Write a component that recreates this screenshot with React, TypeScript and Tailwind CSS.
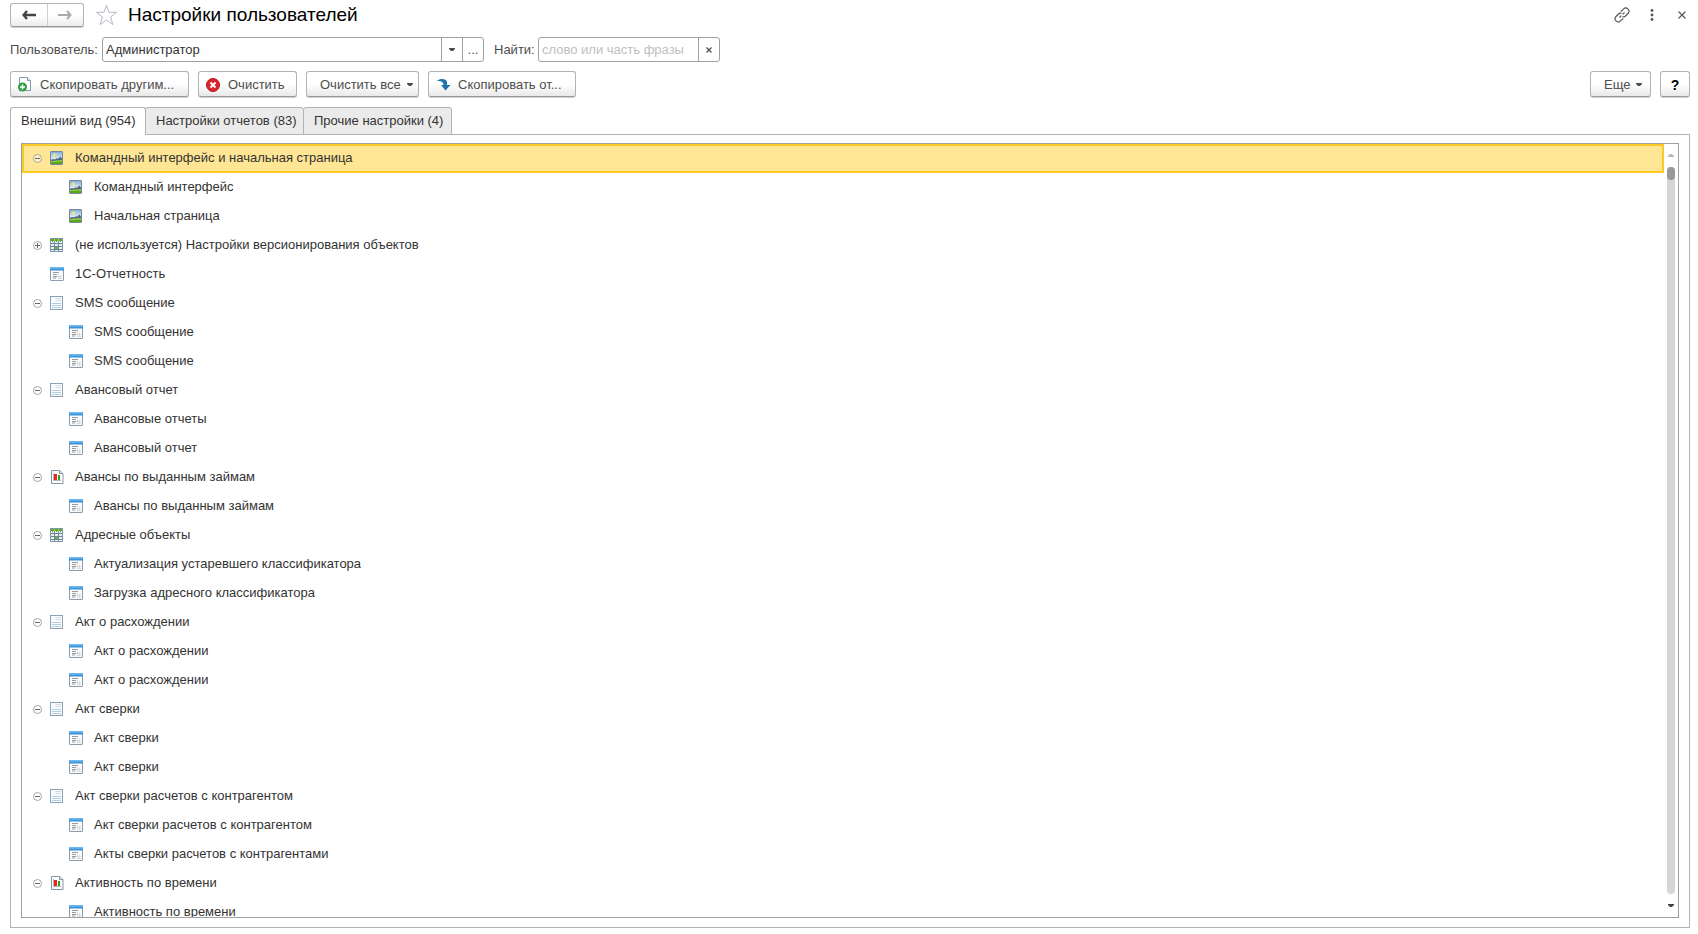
import { useState, type ReactNode } from 'react'
import { clsx } from 'clsx'

type IconName = 'picture' | 'register' | 'form' | 'document' | 'report'

interface TreeNode {
  id: string
  title: string
  icon: IconName
  collapsed?: boolean
  children?: TreeNode[]
}

const form = (id: string, title: string): TreeNode => ({ id, title, icon: 'form' })

const nodes: TreeNode[] = [
  {
    id: 'ui',
    title: 'Командный интерфейс и начальная страница',
    icon: 'picture',
    children: [
      { id: 'ui-1', title: 'Командный интерфейс', icon: 'picture' },
      { id: 'ui-2', title: 'Начальная страница', icon: 'picture' },
    ],
  },
  {
    id: 'versions',
    title: '(не используется) Настройки версионирования объектов',
    icon: 'register',
    collapsed: true,
    children: [form('versions-1', 'Настройки версионирования объектов')],
  },
  form('reporting', '1С-Отчетность'),
  {
    id: 'sms',
    title: 'SMS сообщение',
    icon: 'document',
    children: [form('sms-1', 'SMS сообщение'), form('sms-2', 'SMS сообщение')],
  },
  {
    id: 'advance',
    title: 'Авансовый отчет',
    icon: 'document',
    children: [form('advance-1', 'Авансовые отчеты'), form('advance-2', 'Авансовый отчет')],
  },
  {
    id: 'loans',
    title: 'Авансы по выданным займам',
    icon: 'report',
    children: [form('loans-1', 'Авансы по выданным займам')],
  },
  {
    id: 'address',
    title: 'Адресные объекты',
    icon: 'register',
    children: [
      form('address-1', 'Актуализация устаревшего классификатора'),
      form('address-2', 'Загрузка адресного классификатора'),
    ],
  },
  {
    id: 'diff',
    title: 'Акт о расхождении',
    icon: 'document',
    children: [form('diff-1', 'Акт о расхождении'), form('diff-2', 'Акт о расхождении')],
  },
  {
    id: 'check',
    title: 'Акт сверки',
    icon: 'document',
    children: [form('check-1', 'Акт сверки'), form('check-2', 'Акт сверки')],
  },
  {
    id: 'contractor',
    title: 'Акт сверки расчетов с контрагентом',
    icon: 'document',
    children: [
      form('contractor-1', 'Акт сверки расчетов с контрагентом'),
      form('contractor-2', 'Акты сверки расчетов с контрагентами'),
    ],
  },
  {
    id: 'activity',
    title: 'Активность по времени',
    icon: 'report',
    children: [form('activity-1', 'Активность по времени')],
  },
]

const tabs = [
  { title: 'Внешний вид (954)', width: 'w-[136px]' },
  { title: 'Настройки отчетов (83)', width: 'w-[159px]' },
  { title: 'Прочие настройки (4)', width: 'w-[149px]' },
]

function NodeIcon({ name }: { name: IconName }) {
  const common = { width: 14, height: 14, viewBox: '0 0 14 14', className: 'shrink-0', 'aria-hidden': true }

  switch (name) {
    case 'picture':
      return (
        <svg {...common}>
          <defs>
            <linearGradient id="sky" x1="0" y1="0" x2="0" y2="1">
              <stop offset="0" stopColor="#7fa9dc" />
              <stop offset="0.6" stopColor="#e6f2fb" />
            </linearGradient>
          </defs>
          <rect x="0.5" y="0.5" width="12" height="13" rx="0.5" fill="url(#sky)" stroke="#7488a0" />
          <path d="M1 10V8.700L3 8l1.500.6L7 7.300l1.200.4L10.300 5.500 12 7.500V10z" fill="#52667a" />
          <rect x="1" y="10" width="11" height="3" fill="#58a81f" />
          <path d="M1 9.800c3 .4 6-.8 11-.8v1.500c-4 0-7 .8-11 .5z" fill="#9ccf4a" />
          <path d="M4.500 2v4M2.500 4h4" stroke="#fff04a" fill="none" />
        </svg>
      )
    case 'register':
      return (
        <svg {...common}>
          <rect x="0.5" y="0.5" width="12" height="13" fill="#e9f1f7" stroke="#8298aa" />
          <path d="M4.500 2v11M8.500 2v11M1 5.500h11M1 8.500h11M1 11.500h11" stroke="#6c8799" fill="none" />
          <rect x="1" y="1" width="11" height="2" fill="#a5d36f" />
          <path d="M1 1h3v2H3v1H2V3H1zM5 1h3v2H7v1H6V3H5zM9 1h3v2h-1v1h-1V3H9z" fill="#5fa81f" />
          <rect x="5" y="9" width="3" height="2" fill="#67bd28" />
        </svg>
      )
    case 'form':
      return (
        <svg {...common}>
          <rect x="0.5" y="0.5" width="13" height="13" rx="0.5" fill="#f8fafb" stroke="#8c9cab" />
          <path d="M0 1Q0 0 1 0h12q1 0 1 1v2.500H0z" fill="#3a92d8" />
          <path d="M0 1Q0 0 1 0h12q1 0 1 1v.8H0z" fill="#68b7f0" />
          <path d="M3 5.500h6M3 7.500h4M3 9.500h4M3 11h3" stroke="#9b9b9b" strokeWidth="1.200" fill="none" />
          <path d="M7 9.500h5M8 11.500h4M8.500 7v5M10.500 8v4" stroke="#dadada" fill="none" />
        </svg>
      )
    case 'document':
      return (
        <svg {...common}>
          <rect x="0.5" y="0.5" width="12" height="13" fill="#f8fbfd" stroke="#8da1b3" />
          <path d="M5.500 2.500H11M5.500 4.500H11" stroke="#d3dce3" fill="none" />
          <path d="M2 7.500h9M2 9.500h9M2 11.500h9" stroke="#b3cee1" fill="none" />
        </svg>
      )
    case 'report':
      return (
        <svg {...common}>
          <path d="M1.500.5h8l3.500 3v10H1.500z" fill="#fff" stroke="#8595a2" />
          <path d="M9.500.5v3H13" fill="#dce5ec" stroke="#8595a2" />
          <path d="M3.500 3v7.500H11" stroke="#b5b5b5" fill="none" />
          <rect x="4" y="4" width="3" height="6" fill="#e8281e" />
          <rect x="8" y="5" width="2" height="5" fill="#2ca02c" />
        </svg>
      )
  }
}

function Caret({ up, className }: { up?: boolean; className?: string }) {
  return (
    <svg width="6" height="4" viewBox="0 0 6 4" className={clsx('shrink-0', className)} aria-hidden="true">
      <path d={up ? 'M0 4V3l2-2h2l2 2v1z' : 'M0 0h6v1L4 3H2L0 1z'} fill="currentColor" />
    </svg>
  )
}

function ToolButton({ children, className, label }: { children: ReactNode; className?: string; label?: string }) {
  return (
    <button
      type="button"
      aria-label={label}
      className={clsx(
        'flex h-[26px] items-center rounded-[3px] border border-[#b3b3b3] border-b-[#9a9a9a] bg-linear-to-b from-white from-50% to-[#e9e9e9] pt-px shadow-[0_1px_0_#cfcfcf]',
        className,
      )}
    >
      {children}
    </button>
  )
}

function TreeRow({
  node,
  level,
  open,
  selected,
  onToggle,
  onSelect,
}: {
  node: TreeNode
  level: number
  open: boolean
  selected: boolean
  onToggle: () => void
  onSelect: () => void
}) {
  return (
    <div
      onClick={onSelect}
      className={clsx(
        'flex h-[29px] items-center border-2 pb-px text-[#333]',
        level === 0 ? 'pl-[9px]' : 'pl-7',
        selected ? 'border-[#fbcb23] bg-[#ffe694]' : 'border-transparent',
      )}
    >
      {node.children ? (
        <button type="button" onClick={onToggle} aria-label={open ? 'Свернуть' : 'Развернуть'} className="mr-2 shrink-0">
          <svg width="9" height="9" viewBox="0 0 9 9" aria-hidden="true">
            <circle cx="4.500" cy="4.500" r="4" fill="#fff" fillOpacity="0.5" stroke="#a5a5a5" />
            <path d={open ? 'M2 4.500h5' : 'M2 4.500h5M4.500 2v5'} stroke="#666" />
          </svg>
        </button>
      ) : (
        <span className="mr-2 w-[9px] shrink-0" />
      )}
      <NodeIcon name={node.icon} />
      <span className="ml-[11px] truncate">{node.title}</span>
    </div>
  )
}

export default function App() {
  const [activeTab, setActiveTab] = useState(0)
  const [selected, setSelected] = useState('ui')
  const [user, setUser] = useState('Администратор')
  const [query, setQuery] = useState('')
  const [closed, setClosed] = useState<string[]>(nodes.filter((n) => n.collapsed).map((n) => n.id))

  const toggle = (id: string) =>
    setClosed((prev) => (prev.includes(id) ? prev.filter((x) => x !== id) : [...prev, id]))

  return (
    <div className="flex h-screen flex-col bg-white px-2 pt-[3px] pb-[6px] pl-[10px] font-['Liberation_Sans',Arial,sans-serif] text-[13px] leading-4 text-[#4d4d4d]">
      {/* Title */}
      <header className="flex h-6 items-center">
        <div className="flex h-6 w-[74px] shrink-0 rounded-[3px] border border-[#b3b3b3] border-b-[#9a9a9a] bg-linear-to-b from-white from-50% to-[#ececec] shadow-[0_1px_0_#cfcfcf]">
          <button type="button" aria-label="Назад" className="flex flex-1 items-center justify-center border-r border-[#cfcfcf]">
            <svg width="14" height="10" viewBox="0 0 14 10" aria-hidden="true">
              <path d="M5 1L1.500 5 5 9M1.500 5H14" fill="none" stroke="#444" strokeWidth="2.400" />
            </svg>
          </button>
          <button type="button" aria-label="Вперед" className="flex flex-1 items-center justify-center">
            <svg width="14" height="10" viewBox="0 0 14 10" aria-hidden="true">
              <path d="M9 1l3.500 4L9 9M12.500 5H0" fill="none" stroke="#aaa" strokeWidth="2" />
            </svg>
          </button>
        </div>
        <button type="button" aria-label="В избранное" className="ml-[11px] shrink-0">
          <svg width="23" height="22" viewBox="0 0 23 22" aria-hidden="true">
            <path
              d="M11.500 1.200l2.500 7.100h7.600l-6 4.700 2.200 7.600-6.300-4.500-6.300 4.500 2.200-7.600-6-4.700h7.600z"
              fill="#fff"
              stroke="#b4bac2"
            />
          </svg>
        </button>
        <h1 className="ml-[10px] text-[19px] leading-6 text-black">Настройки пользователей</h1>
        <div className="ml-auto flex items-center pr-1 text-[#555]">
          <button type="button" aria-label="Ссылка">
            <svg width="16" height="16" viewBox="0 0 16 16" fill="none" stroke="currentColor" strokeWidth="1.200" aria-hidden="true">
              <path d="M6.800 4.700l2.900-2.900a2.800 2.800 0 0 1 4 0l.5.500a2.800 2.800 0 0 1 0 4L11.500 9a2.800 2.800 0 0 1-3 .500" />
              <path d="M9.200 11.300l-2.900 2.900a2.800 2.800 0 0 1-4 0l-.5-.5a2.800 2.800 0 0 1 0-4L4.500 7a2.800 2.800 0 0 1 3-.5" />
              <path d="M5.500 10.500l1.800-1.800M8.700 7.300l1.800-1.800" />
            </svg>
          </button>
          <button type="button" aria-label="Меню" className="ml-5">
            <svg width="4" height="12" viewBox="0 0 4 12" fill="currentColor" aria-hidden="true">
              <circle cx="2" cy="1.500" r="1.400" />
              <circle cx="2" cy="6" r="1.400" />
              <circle cx="2" cy="10.500" r="1.400" />
            </svg>
          </button>
          <button type="button" aria-label="Закрыть" className="ml-6">
            <svg width="8" height="8" viewBox="0 0 8 8" stroke="currentColor" strokeWidth="1.200" aria-hidden="true">
              <path d="M.5.5l7 7M7.500.5l-7 7" />
            </svg>
          </button>
        </div>
      </header>

      {/* User and search */}
      <div className="mt-[10px] flex items-center">
        <label htmlFor="user" className="w-[92px] shrink-0">
          Пользователь:
        </label>
        <div className="flex h-[25px] w-[382px] rounded-[3px] border border-[#a0a0a0]">
          <input
            id="user"
            value={user}
            onChange={(e) => setUser(e.target.value)}
            className="min-w-0 flex-1 px-[3px] text-[#333] outline-none"
          />
          <button type="button" aria-label="Выбрать из списка" className="flex w-[21px] items-center justify-center border-l border-[#a0a0a0]">
            <Caret />
          </button>
          <button type="button" aria-label="Выбрать" className="w-[21px] border-l border-[#a0a0a0]">
            ...
          </button>
        </div>
        <label htmlFor="search" className="ml-[10px] w-11 shrink-0">
          Найти:
        </label>
        <div className="flex h-[25px] w-[182px] rounded-[3px] border border-[#a0a0a0]">
          <input
            id="search"
            value={query}
            onChange={(e) => setQuery(e.target.value)}
            placeholder="слово или часть фразы"
            className="min-w-0 flex-1 pl-[3px] text-[#333] outline-none placeholder:text-[#c0c0c0]"
          />
          <button
            type="button"
            aria-label="Очистить поиск"
            onClick={() => setQuery('')}
            className="flex w-[21px] items-center justify-center border-l border-[#a0a0a0]"
          >
            <svg width="6" height="6" viewBox="0 0 6 6" stroke="currentColor" strokeWidth="1.200" aria-hidden="true">
              <path d="M.5.5l5 5M5.500.5l-5 5" />
            </svg>
          </button>
        </div>
      </div>

      {/* Commands */}
      <div className="mt-[9px] flex items-center gap-[9px]">
        <ToolButton className="w-[179px] pl-[7px]">
          <svg width="14" height="15" viewBox="0 0 14 15" aria-hidden="true">
            <path d="M1.500.5h8l3 3v10h-11z" fill="#fff" stroke="#8797a6" />
            <path d="M9.500.5v3h3" fill="#e3eaf0" stroke="#8797a6" />
            <circle cx="4.500" cy="10" r="4.500" fill="#2f9e3f" />
            <path d="M4.500 7.500v5M2 10h5" stroke="#fff" strokeWidth="1.500" />
          </svg>
          <span className="ml-2">Скопировать другим...</span>
        </ToolButton>
        <ToolButton className="w-[99px] pl-[7px]">
          <svg width="14" height="14" viewBox="0 0 14 14" aria-hidden="true">
            <circle cx="7" cy="7" r="6.500" fill="#d9252b" stroke="#b5161c" />
            <path d="M4.500 4.500l5 5M9.500 4.500l-5 5" stroke="#fff" strokeWidth="2" />
          </svg>
          <span className="ml-2">Очистить</span>
        </ToolButton>
        <ToolButton className="w-[113px] pl-[13px]">
          Очистить все
          <Caret className="ml-[6px]" />
        </ToolButton>
        <ToolButton className="w-[148px] pl-2">
          <svg width="14" height="12" viewBox="0 0 14 12" aria-hidden="true">
            <path d="M0 2C3-.6 8-.6 10 2.500V6h3.500L8.500 11.500 4 6h2.500C6.500 3 4 1.500 0 2z" fill="#2373ae" />
          </svg>
          <span className="ml-[7px]">Скопировать от...</span>
        </ToolButton>
        <ToolButton className="ml-auto w-[61px] pl-[13px]">
          Еще
          <Caret className="ml-[6px]" />
        </ToolButton>
        <ToolButton className="w-[30px] justify-center text-sm font-bold text-black" label="Справка">
          ?
        </ToolButton>
      </div>

      {/* Tabs */}
      <div role="tablist" className="relative z-10 mt-[10px] -mb-px flex">
        {tabs.map((tab, i) => (
          <button
            key={tab.title}
            type="button"
            role="tab"
            aria-selected={activeTab === i}
            onClick={() => setActiveTab(i)}
            className={clsx(
              'h-7 rounded-t-[3px] border border-[#b3b3b3] pl-[10px] text-left whitespace-nowrap text-[#333]',
              tab.width,
              i > 0 && '-ml-px',
              activeTab === i ? 'border-b-white bg-white' : 'bg-[#ebebeb]',
            )}
          >
            {tab.title}
          </button>
        ))}
      </div>

      <main className="flex min-h-0 flex-1 border border-[#b3b3b3] px-[10px] pt-2 pb-[9px]">
        <div className="flex min-w-0 flex-1 border border-[#a0a0a0]">
          <ul role="tree" aria-label={tabs[activeTab].title} className="min-w-0 flex-1 overflow-hidden">
            {nodes.map((node) => {
              const open = !closed.includes(node.id)
              return (
                <li key={node.id} role="treeitem" aria-expanded={node.children ? open : undefined}>
                  <TreeRow
                    node={node}
                    level={0}
                    open={open}
                    selected={selected === node.id}
                    onToggle={() => toggle(node.id)}
                    onSelect={() => setSelected(node.id)}
                  />
                  {node.children && open && (
                    <ul role="group">
                      {node.children.map((child) => (
                        <li key={child.id} role="treeitem">
                          <TreeRow
                            node={child}
                            level={1}
                            open={false}
                            selected={selected === child.id}
                            onToggle={() => undefined}
                            onSelect={() => setSelected(child.id)}
                          />
                        </li>
                      ))}
                    </ul>
                  )}
                </li>
              )
            })}
          </ul>
          {/* Scroll bar */}
          <div className="flex w-[14px] shrink-0 flex-col items-center py-[9px]">
            <Caret up className="text-[#b8b8b8]" />
            <div className="my-[10px] w-2 flex-1 rounded-full bg-[#d6d6d6]">
              <div className="h-[13px] rounded-full bg-[#999]" />
            </div>
            <Caret className="text-[#444]" />
          </div>
        </div>
      </main>
    </div>
  )
}
